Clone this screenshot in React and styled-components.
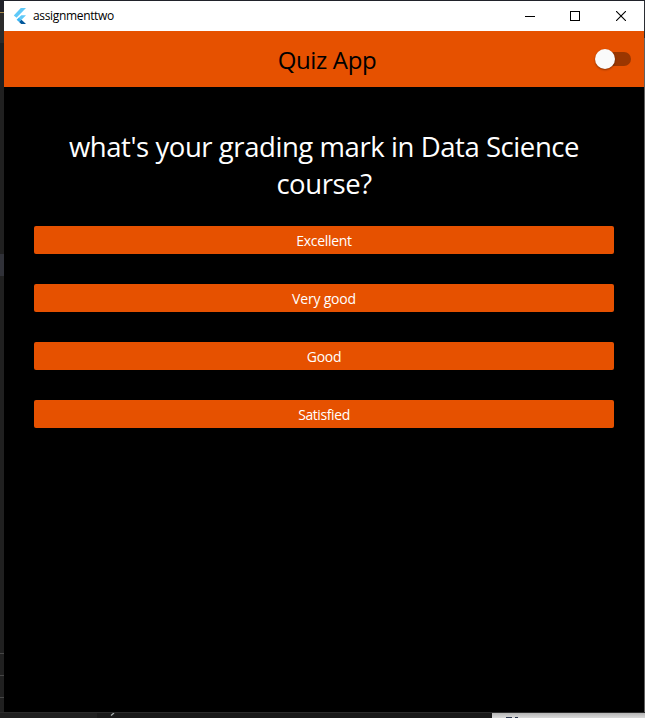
import React, { useState } from "react";
import styled, { createGlobalStyle } from "styled-components";

const GlobalStyle = createGlobalStyle`
  * { box-sizing: border-box; }
  body { margin: 0; overflow: hidden; background: #202020; font-family: "Open Sans", "Noto Sans", sans-serif; }
  button { font: inherit; border: 0; padding: 0; }
`;

const Desktop = styled.div`
  display: grid;
  grid-template-columns: 4px 640px 1px;
  grid-template-rows: 1px 711px 6px;
  width: 645px;
  height: 718px;
`;

const TopEdge = styled.div`
  grid-column: 1 / -1;
  background: #20222a;
`;

const LeftEdge = styled.div`
  display: flex;
  flex-direction: column;
  overflow: hidden;
  background: #202020;
`;

const EdgePart = styled.div`
  height: ${(p) => p.$h}px;
  flex: none;
  background: ${(p) => p.$color};
`;

const RightEdge = styled.div`
  background: linear-gradient(#2b2d33 37px, #606060 37px);
`;

const BottomEdge = styled.div`
  grid-column: 1 / -1;
  display: flex;
  border-top: 1px solid #2c2c2c;
  overflow: hidden;
`;

const DarkPane = styled.div`
  width: ${(p) => p.$w}px;
  padding-left: ${(p) => p.$pad || 0}px;
  background: ${(p) => p.$color};
`;

const LightPane = styled.div`
  flex: 1;
  padding-left: 14px;
  background: linear-gradient(#b4b4b4, #dadada);
`;

const Fragment = styled.svg`
  display: block;
`;

const Window = styled.main`
  display: flex;
  flex-direction: column;
  background: #000;
`;

const TitleBar = styled.header`
  display: flex;
  align-items: center;
  height: 30px;
  padding-left: 8px;
  background: #fff;
`;

const WindowTitle = styled.span`
  flex: 1;
  margin-left: 5px;
  color: #000;
  font-size: 12px;
  line-height: 16px;
  letter-spacing: -0.34px;
`;

const WindowButton = styled.button`
  display: flex;
  align-items: center;
  justify-content: center;
  width: ${(p) => p.$w || 45}px;
  height: 30px;
  background: transparent;
`;

const AppBar = styled.div`
  display: grid;
  grid-template-columns: 60px 1fr 60px;
  align-items: center;
  height: 56px;
  background: #e65100;
`;

const AppTitle = styled.h1`
  grid-column: 2;
  margin: 1px 0 0 6px;
  text-align: center;
  color: #000;
  font-size: 24px;
  font-weight: 400;
  line-height: 32px;
  letter-spacing: -0.35px;
`;

const Switch = styled.button`
  display: flex;
  align-items: center;
  width: 34px;
  height: 14px;
  margin-left: 13px;
  border-radius: 7px;
  background: #9a3600;
`;

const Thumb = styled.span`
  flex: none;
  width: 20px;
  height: 20px;
  margin-left: ${(p) => (p.$on ? 16 : -2)}px;
  border-radius: 50%;
  background: #fafafa;
  box-shadow: 0 1px 2px rgba(0, 0, 0, 0.4);
`;

const Quiz = styled.section`
  display: flex;
  flex-direction: column;
  padding: 41px 30px 0;
`;

const Question = styled.h2`
  margin: 0 0 24px;
  text-align: center;
  color: #fff;
  font-size: 27.5px;
  font-weight: 400;
  line-height: 37px;
  letter-spacing: -0.43px;
`;

const Answers = styled.div`
  display: flex;
  flex-direction: column;
  gap: 30px;
`;

const Answer = styled.button`
  height: 28px;
  padding-top: 2px;
  border-radius: 2px;
  background: #e65100;
  color: #fff;
  font-size: 14px;
  font-weight: 500;
  line-height: 26px;
  letter-spacing: ${(p) => p.$spacing}px;
`;

const edgeParts = [
  [11, "#20222a"], [1, "#a58b4c"], [30, "#2b2b2b"], [211, "#202020"],
  [22, "#303138"], [377, "#202020"], [1, "#464646"], [21, "#202020"],
  [1, "#464646"], [21, "#202020"], [1, "#464646"], [14, "#202020"],
];

const answers = [
  ["Excellent", -0.3],
  ["Very good", -0.2],
  ["Good", -0.25],
  ["Satisfied", -0.4],
];

function FlutterLogo() {
  return (
    <svg width="16" height="16" viewBox="0 0 16 16">
      <path d="M8.8 0H14L4.5 9.8 1.8 7.6z" fill="#5fc9f8" />
      <path d="M9.3 7.2H14L9.5 11.8 6.9 9.5z" fill="#5fc9f8" />
      <path d="M4.6 11.7 6.9 9.4 9.5 11.8 7.1 14.1z" fill="#38b6f6" />
      <path d="M7.1 14.1 9.5 11.8 14 16H9.2z" fill="#01579b" />
    </svg>
  );
}

export default function App() {
  const [on, setOn] = useState(false);
  return (
    <>
      <GlobalStyle />
      <Desktop>
        <TopEdge />
        <LeftEdge>
          {edgeParts.map(([h, color], i) => <EdgePart key={i} $h={h} $color={color} />)}
        </LeftEdge>
        <Window>
          <TitleBar>
            <FlutterLogo />
            <WindowTitle>assignmenttwo</WindowTitle>
            <WindowButton $w={44} aria-label="Minimize">
              <svg width="10" height="10" shapeRendering="crispEdges"><path d="M0 5h10v1H0z" /></svg>
            </WindowButton>
            <WindowButton $w={46} aria-label="Maximize">
              <svg width="10" height="10" shapeRendering="crispEdges"><path d="M.5.5h9v9h-9z" fill="none" stroke="#000" /></svg>
            </WindowButton>
            <WindowButton $w={46} aria-label="Close">
              <svg width="10" height="10"><path d="M0 0l10 10M10 0L0 10" fill="none" stroke="#000" strokeWidth="1.1" /></svg>
            </WindowButton>
          </TitleBar>
          <AppBar>
            <AppTitle>Quiz App</AppTitle>
            <Switch role="switch" aria-checked={on} aria-label="Theme" onClick={() => setOn(!on)}>
              <Thumb $on={on} />
            </Switch>
          </AppBar>
          <Quiz>
            <Question>what's your grading mark in Data Science course?</Question>
            <Answers>
              {answers.map(([label, spacing]) => <Answer key={label} $spacing={spacing}>{label}</Answer>)}
            </Answers>
          </Quiz>
        </Window>
        <RightEdge />
        <BottomEdge>
          <DarkPane $w={97} $color="#202020" />
          <DarkPane $w={395} $color="#191919" $pad={13}>
            <Fragment width="5" height="3"><path d="M4 0 1 2.5" stroke="#a9b0b0" strokeWidth="1.3" /></Fragment>
          </DarkPane>
          <LightPane>
            <Fragment width="14" height="5"><path d="M0 4h6v1H0zM9 4h3v1H9z" fill="#29344c" /></Fragment>
          </LightPane>
        </BottomEdge>
      </Desktop>
    </>
  );
}
